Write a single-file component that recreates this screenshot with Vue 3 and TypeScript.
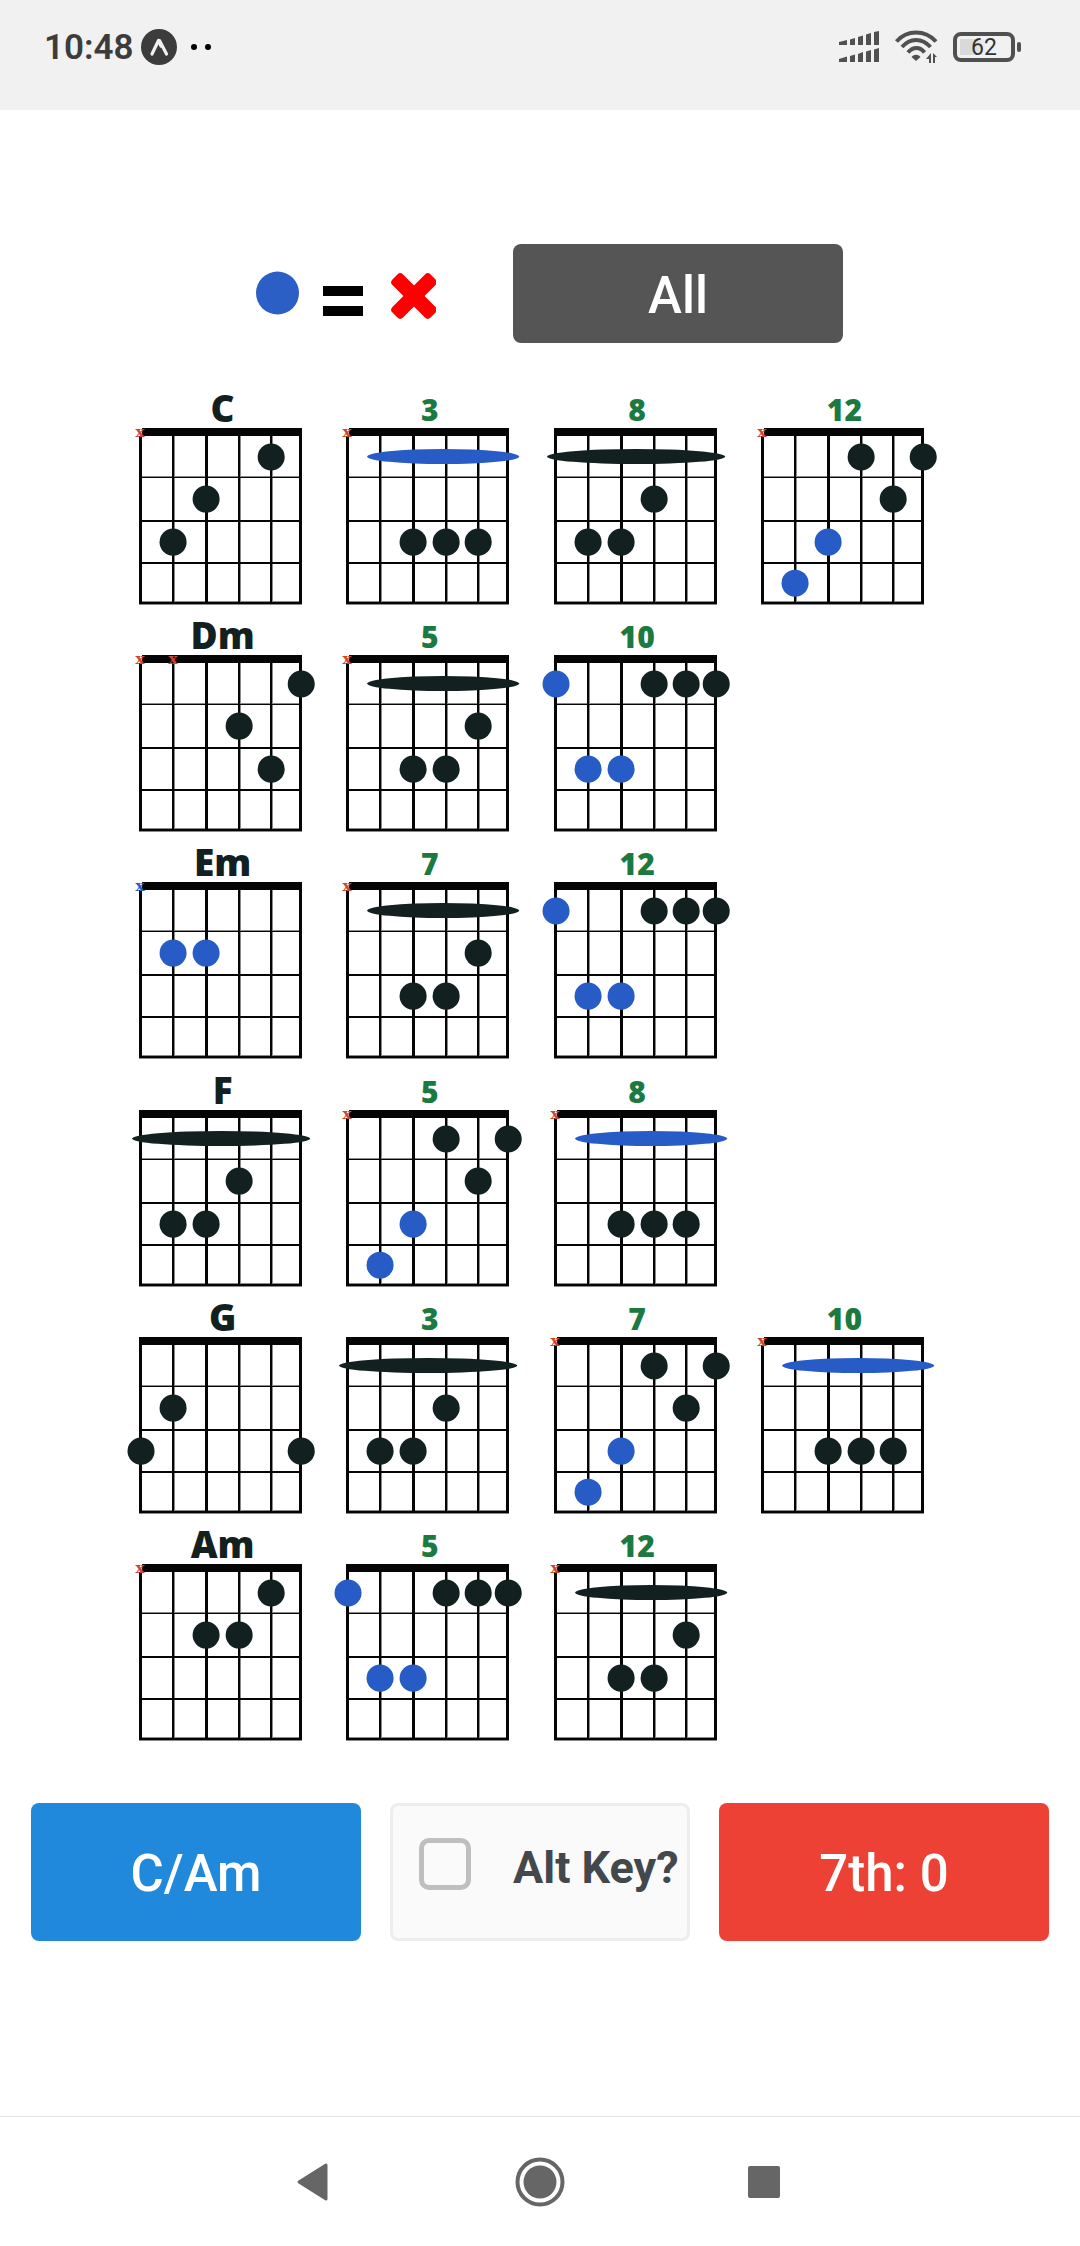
<script setup lang="ts">
import { ref } from 'vue'

type Tone = 'dark' | 'blue'

interface Dot {
  string: number
  fret: number
  tone?: Tone
}

interface Shape {
  label: string
  open?: boolean
  mutes?: { string: number; tone?: Tone }[]
  barre?: { from: 1 | 2; tone?: Tone }
  dots: Dot[]
}

interface ChordRow {
  name: string
  shapes: Shape[]
}

const stringX = [2, 34, 67, 100, 132, 162]
const fretY = [29, 71, 114, 155]

const strings = [
  { x: 0, w: 3 },
  { x: 33, w: 2 },
  { x: 66, w: 3 },
  { x: 99, w: 2 },
  { x: 131, w: 2 },
  { x: 160, w: 3 },
]

const barres = {
  1: { cx: 82, rx: 89 },
  2: { cx: 97, rx: 76 },
}

const dot = (string: number, fret: number, tone: Tone = 'dark'): Dot => ({ string, fret, tone })
const muted = [{ string: 1 }]

// Movable shapes, named after the open chord each one comes from
const cShape = (label: string): Shape => ({
  label,
  mutes: muted,
  dots: [dot(4, 1), dot(6, 1), dot(5, 2), dot(3, 3, 'blue'), dot(2, 4, 'blue')],
})
const aShape = (label: string): Shape => ({
  label,
  mutes: muted,
  barre: { from: 2, tone: 'blue' },
  dots: [dot(3, 3), dot(4, 3), dot(5, 3)],
})
const amShape = (label: string): Shape => ({
  label,
  mutes: muted,
  barre: { from: 2 },
  dots: [dot(5, 2), dot(3, 3), dot(4, 3)],
})
const eShape = (label: string, open = false): Shape => ({
  label,
  open,
  barre: { from: 1 },
  dots: [dot(4, 2), dot(2, 3), dot(3, 3)],
})
const emShape = (label: string): Shape => ({
  label,
  dots: [dot(1, 1, 'blue'), dot(4, 1), dot(5, 1), dot(6, 1), dot(2, 3, 'blue'), dot(3, 3, 'blue')],
})

const rows: ChordRow[] = [
  {
    name: 'C',
    shapes: [
      { label: 'C', open: true, mutes: muted, dots: [dot(5, 1), dot(3, 2), dot(2, 3)] },
      aShape('3'),
      eShape('8'),
      cShape('12'),
    ],
  },
  {
    name: 'Dm',
    shapes: [
      {
        label: 'Dm',
        open: true,
        mutes: [{ string: 1 }, { string: 2 }],
        dots: [dot(6, 1), dot(4, 2), dot(5, 3)],
      },
      amShape('5'),
      emShape('10'),
    ],
  },
  {
    name: 'Em',
    shapes: [
      {
        label: 'Em',
        open: true,
        mutes: [{ string: 1, tone: 'blue' }],
        dots: [dot(2, 2, 'blue'), dot(3, 2, 'blue')],
      },
      amShape('7'),
      emShape('12'),
    ],
  },
  { name: 'F', shapes: [eShape('F', true), cShape('5'), aShape('8')] },
  {
    name: 'G',
    shapes: [
      { label: 'G', open: true, dots: [dot(2, 2), dot(1, 3), dot(6, 3)] },
      eShape('3'),
      cShape('7'),
      aShape('10'),
    ],
  },
  {
    name: 'Am',
    shapes: [
      { label: 'Am', open: true, mutes: muted, dots: [dot(5, 1), dot(3, 2), dot(4, 2)] },
      emShape('5'),
      amShape('12'),
    ],
  },
]

const altKey = ref(false)
</script>

<template>
  <div class="screen">
    <header class="status">
      <div class="status-left">
        <span class="time">10:48</span>
        <svg class="app-icon" width="36" height="36" viewBox="0 0 36 36" aria-hidden="true">
          <circle cx="18" cy="18" r="18" fill="#3c3c3c" />
          <path d="M11 25 L17.500 11.500 H18.500 L25.500 25 M17.500 11.500 L20 17" fill="none" stroke="#f1f1f1" stroke-width="3.200" stroke-linecap="round" stroke-linejoin="round" />
        </svg>
        <svg width="20" height="6" viewBox="0 0 20 6" aria-hidden="true">
          <circle cx="3" cy="3" r="3" />
          <circle cx="17" cy="3" r="3" />
        </svg>
      </div>
      <div class="status-right">
        <svg width="40" height="32" viewBox="0 0 40 32" fill="#505050" aria-hidden="true">
          <path d="M0 11l8-2v5H0zM11 8.500l5-1.500v7h-5zM19 6l5-1.500V14h-5zM27 3.500L32 2v12h-5zM35 1l5-1v14h-5z" />
          <path d="M0 28l8-2.500V31H0zM11 25l5-1.500V31h-5zM19 23l5-2v10h-5zM27 20.500l5-1.500v12h-5zM35 18.500l5-1.500v14h-5z" />
        </svg>
        <svg class="wifi" width="43" height="34" viewBox="0 0 43 34" aria-hidden="true">
          <g fill="none" stroke="#505050" stroke-width="4">
            <path d="M1.500 11.500C12-.500 30-.500 41 11.500" />
            <path d="M7 17C15 7.500 27 7.500 35.500 17" />
            <path d="M13 22.500C18 16.500 25 16.500 29.500 22.500" />
          </g>
          <path d="M16.500 27C19 24 23 24 25.500 27L21 31z" fill="#505050" />
          <path d="M36 23v10h-2v-4h-3zM38 33V23l4 4h-2v6z" fill="#505050" />
        </svg>
        <div class="battery"><span>62</span></div>
      </div>
    </header>

    <main>
      <section class="legend">
        <svg width="180" height="51" viewBox="0 0 180 51" role="img" aria-label="Blue dot equals muted string">
          <circle cx="21.500" cy="25" r="21.500" fill="#2c5fc5" />
          <path d="M67 18h40v10H67zM67 38h40v10H67z" fill="#000" />
          <g fill="#f00" transform="translate(158 28)">
            <rect x="-27" y="-7.500" width="54" height="15" rx="4" transform="rotate(45)" />
            <rect x="-27" y="-7.500" width="54" height="15" rx="4" transform="rotate(-45)" />
          </g>
        </svg>
        <button type="button" class="btn all">All</button>
      </section>

      <section class="chords">
        <div v-for="row in rows" :key="row.name" class="chord-row">
          <figure v-for="shape in row.shapes" :key="shape.label" class="chord">
            <figcaption :class="shape.open ? 'name' : 'position'">{{ shape.label }}</figcaption>
            <svg class="diagram" viewBox="-18 0 207 179" aria-hidden="true">
              <g class="shade">
                <rect v-for="s in strings" :key="s.x" :x="s.x" y="8" :width="s.w === 2 ? 3 : s.w" height="168" />
                <rect x="0" y="48" width="163" height="1" />
                <rect x="0" y="173" width="163" height="4" />
              </g>
              <g class="lines">
                <rect v-for="s in strings" :key="s.x" :x="s.x" y="1" :width="s.w" height="175" />
                <rect x="0" y="49" width="163" height="1" />
                <rect x="0" y="92" width="163" height="2" />
                <rect x="0" y="134" width="163" height="2" />
                <rect x="0" y="174" width="163" height="2" />
                <rect x="0" y="0" width="163" height="8" />
              </g>
              <template v-for="m in shape.mutes" :key="m.string">
                <rect v-if="m.string === 1" x="-1" y="0" width="4" height="8" fill="#fff" />
                <text :class="['mute', m.tone]" :x="m.string === 1 ? 1 : stringX[m.string - 1]" y="9">x</text>
              </template>
              <ellipse
                v-if="shape.barre"
                :class="shape.barre.tone"
                :cx="barres[shape.barre.from].cx"
                cy="28.500"
                :rx="barres[shape.barre.from].rx"
                ry="7.500"
              />
              <circle
                v-for="d in shape.dots"
                :key="`${d.string}-${d.fret}`"
                :class="d.tone"
                :cx="stringX[d.string - 1]"
                :cy="fretY[d.fret - 1]"
                r="13.500"
              />
            </svg>
          </figure>
        </div>
      </section>

      <section class="actions">
        <button type="button" class="btn key">C/Am</button>
        <label class="alt">
          <input v-model="altKey" type="checkbox" />
          <span>Alt Key?</span>
        </label>
        <button type="button" class="btn seventh">7th: 0</button>
      </section>
    </main>

    <nav class="system-nav">
      <button type="button" aria-label="Back">
        <svg width="34" height="50" viewBox="0 0 34 50">
          <path d="M29 8V42L2 25z" fill="#666" stroke="#666" stroke-width="3" stroke-linejoin="round" />
        </svg>
      </button>
      <button type="button" aria-label="Home">
        <svg width="50" height="50" viewBox="0 0 50 50">
          <circle cx="25" cy="25" r="22.500" fill="none" stroke="#666" stroke-width="4" />
          <circle cx="25" cy="25" r="16.500" fill="#666" />
        </svg>
      </button>
      <button type="button" aria-label="Recent apps">
        <svg width="36" height="50" viewBox="0 0 36 50">
          <rect x="0" y="9" width="32" height="32" rx="2" fill="#666" />
        </svg>
      </button>
    </nav>
  </div>
</template>

<style>
body {
  margin: 0;
  background: #fff;
}
</style>

<style scoped>
.screen {
  display: flex;
  flex-direction: column;
  min-height: 100vh;
  font-family: Roboto, "Liberation Sans", sans-serif;
}

.status {
  display: flex;
  justify-content: space-between;
  box-sizing: border-box;
  height: 110px;
  padding: 27px 59px 43px 44px;
  background: #f1f1f1;
}

.status-left,
.status-right {
  display: flex;
  align-items: center;
}

.time {
  padding-top: 2px;
  font-size: 35px;
  line-height: 40px;
  font-weight: 600;
  color: #3c3c3c;
}

.app-icon {
  margin: 0 14px 0 7px;
}

.wifi {
  margin: 0 15px 0 16px;
}

.battery {
  position: relative;
  box-sizing: border-box;
  width: 62px;
  height: 30px;
  margin-right: 6px;
  border: 4px solid #505050;
  border-radius: 8px;
  background: linear-gradient(90deg, #d9d9d9 40%, #f1f1f1 90%) 3px 3px / 30px 16px no-repeat;
  font-size: 23px;
  line-height: 24px;
  text-align: center;
  color: #333;
}

.battery::after {
  content: "";
  position: absolute;
  top: 6px;
  right: -10px;
  width: 4px;
  height: 10px;
  border-radius: 2px;
  background: #505050;
}

.legend {
  display: flex;
  align-items: center;
  justify-content: center;
  gap: 77px;
  padding: 134px 0 37px 19px;
}

.btn {
  box-sizing: border-box;
  border: 0;
  border-radius: 8px;
  padding: 4px 0 0;
  font-family: inherit;
  font-size: 51px;
  line-height: 60px;
  font-weight: 500;
  color: #fff;
}

.all {
  width: 330px;
  height: 99px;
  background: #555;
}

.chords {
  padding: 0 130px 0 121px;
}

.chord-row {
  display: grid;
  grid-template-columns: repeat(4, 1fr);
}

.chord {
  margin: 0;
}

figcaption {
  height: 48px;
  padding-right: 4px;
  box-sizing: border-box;
  font-family: "Open Sans", "Noto Sans", sans-serif;
  font-weight: 800;
  text-align: center;
}

.name {
  font-size: 37px;
  line-height: 56px;
  color: #12211f;
}

.position {
  font-size: 30px;
  line-height: 60px;
  color: #1b7a3f;
}

.diagram {
  display: block;
  width: 100%;
  overflow: visible;
  fill: #12211f;
}

.diagram .blue {
  fill: #275bc6;
}

.shade {
  fill: #8a8a8a;
}

.lines {
  fill: #050505;
}

.shade,
.lines {
  shape-rendering: crispEdges;
}

.mute {
  font-family: "DejaVu Serif", serif;
  font-size: 15px;
  font-weight: 700;
  text-anchor: middle;
  fill: #d2432f;
}

.actions {
  display: grid;
  grid-template-columns: 11fr 10fr 11fr;
  gap: 29px;
  padding: 60px 31px;
}

.actions > * {
  height: 138px;
}

.key {
  background: #2189dc;
}

.seventh {
  background: #ec4134;
}

.alt {
  display: flex;
  align-items: center;
  gap: 42px;
  box-sizing: border-box;
  padding: 0 0 16px 26px;
  border: 3px solid #ededed;
  border-radius: 8px;
  background: #fafafa;
  font-size: 45px;
  line-height: 50px;
  font-weight: 700;
  white-space: nowrap;
  color: #43484d;
}

.alt span {
  padding-top: 8px;
}

.alt input {
  appearance: none;
  flex: none;
  box-sizing: border-box;
  width: 52px;
  height: 52px;
  margin: 0;
  border: 5px solid #bfbfbf;
  border-radius: 10px;
}

.alt input:checked {
  background: #2189dc;
}

.system-nav {
  display: flex;
  justify-content: center;
  height: 129px;
  margin-top: auto;
  border-top: 1px solid #e2e2e2;
}

.system-nav button {
  display: flex;
  align-items: center;
  justify-content: center;
  width: 226px;
  padding: 0;
  border: 0;
  background: none;
}
</style>
